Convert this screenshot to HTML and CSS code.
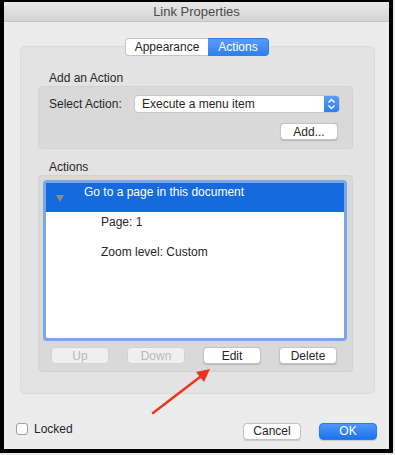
FILE: index.html
```html
<!DOCTYPE html>
<html lang="en">
<head>
    <meta charset="UTF-8">
    <title>Link Properties</title>
    <link rel="stylesheet" href="styles.css">
</head>
<body>

<div class="window">
    <div class="titlebar">Link Properties</div>

    <div class="content">
        <div class="tabs">
            <span class="tab">Appearance</span>
            <span class="tab active">Actions</span>
        </div>

        <div class="group">
            <div class="label">Add an Action</div>
            <div class="box add-box">
                <div class="select-row">
                    <span class="select-label">Select Action:</span>
                    <div class="popup">
                        <span class="popup-text">Execute a menu item</span>
                        <span class="popup-arrows">
                            <svg width="9" height="12" viewBox="0 0 9 12">
                                <path d="M1.5 4.5 L4.5 1.5 L7.5 4.5 M1.5 7.5 L4.5 10.5 L7.5 7.5" fill="none" stroke="#fff" stroke-width="1.4"/>
                            </svg>
                        </span>
                    </div>
                </div>
                <div class="add-row">
                    <button class="btn">Add...</button>
                </div>
            </div>

            <div class="label actions-label">Actions</div>
            <div class="box list-box">
                <div class="list">
                    <div class="row selected">
                        <span class="disclosure"></span>
                        <span class="row-text">Go to a page in this document</span>
                    </div>
                    <div class="row sub">Page: 1</div>
                    <div class="row sub">Zoom level: Custom</div>
                </div>
                <div class="list-buttons">
                    <button class="btn" disabled>Up</button>
                    <button class="btn" disabled>Down</button>
                    <button class="btn">Edit</button>
                    <button class="btn">Delete</button>
                </div>
            </div>
        </div>

        <div class="footer">
            <label class="locked"><span class="checkbox"></span>Locked</label>
            <div class="footer-buttons">
                <button class="btn">Cancel</button>
                <button class="btn primary">OK</button>
            </div>
        </div>
    </div>
</div>

<!-- annotation arrow -->
<svg class="annotation" width="395" height="455" viewBox="0 0 395 455">
    <line x1="153" y1="413" x2="200" y2="377" stroke="#f0321e" stroke-width="2.5" stroke-linecap="round"/>
    <polygon points="210,369 196,372 204,382" fill="#f0321e"/>
</svg>

</body>
</html>
```

FILE: styles.css
```css
body {
    margin: 0;
    background-color: #e9e9e9;
    font-family: 'Liberation Sans', Arial, sans-serif;
    font-size: 12px;
    color: #262626;
}
.window {
    box-sizing: border-box;
    width: 393px;
    height: 453px;
    border: 4px solid #000;
    border-top-width: 2px;
    background-color: #ececec;
}
.titlebar {
    height: 19px;
    line-height: 19px;
    text-align: center;
    font-size: 13px;
    color: #4a4a4a;
    background: linear-gradient(#e8e8e8, #d4d4d4);
    border-bottom: 1px solid #c4c4c4;
}
.content {
    padding: 16px 12px 0 12px;
}
.tabs {
    display: flex;
    justify-content: center;
    position: relative;
    z-index: 1;
    padding-left: 1px;
}
.tab {
    height: 16px;
    line-height: 16px;
    width: 82px;
    text-align: center;
    background-color: #fff;
    border: 1px solid #c6c6c6;
    border-right: none;
    border-radius: 4px 0 0 4px;
    font-size: 12px;
}
.tab.active {
    width: 60px;
    color: #fff;
    background: linear-gradient(#5a9cf6, #2f7ff0);
    border: 1px solid #2f7ff0;
    border-left: none;
    border-radius: 0 4px 4px 0;
}
.group {
    margin: -10px 2px 0 4px;
    padding: 24px 21px 21px 17px;
    background-color: #e3e3e3;
    border: 1px solid #dadada;
    border-radius: 5px;
}
.label {
    height: 14px;
    line-height: 14px;
    padding-left: 11px;
    margin-bottom: 1px;
}
.actions-label {
    margin-top: 11px;
}
.box {
    background-color: #d9d9d9;
    border: 1px solid #d2d2d2;
    border-radius: 4px;
}
.add-box {
    padding: 8px 12px 8px 10px;
}
.select-row {
    display: flex;
    align-items: center;
    height: 18px;
}
.select-label {
    width: 85px;
}
.popup {
    flex: 1;
    display: flex;
    height: 16px;
    background-color: #fff;
    border: 1px solid #c6c6c6;
    border-radius: 4px;
    overflow: hidden;
}
.popup-text {
    flex: 1;
    line-height: 16px;
    padding-left: 7px;
}
.popup-arrows {
    width: 15px;
    display: flex;
    align-items: center;
    justify-content: center;
    background: linear-gradient(#5a9cf6, #2f7ff0);
}
.add-row {
    display: flex;
    justify-content: flex-end;
    margin-top: 10px;
    padding-right: 2px;
}
.btn {
    box-sizing: border-box;
    width: 58px;
    height: 17px;
    padding: 0;
    font-family: inherit;
    font-size: 12px;
    color: #262626;
    background-color: #fff;
    border: 1px solid #c4c4c4;
    border-radius: 4px;
    box-shadow: 0 0.5px 1px rgba(0, 0, 0, 0.15);
}
.btn:disabled {
    color: #b8b8b8;
    background-color: #efefef;
    border-color: #d3d3d3;
    box-shadow: none;
}
.btn.primary {
    color: #fff;
    background: linear-gradient(#4f98f8, #1c72ef);
    border-color: #2a7af0;
}
.list-box {
    padding: 4px 5px 7px 4px;
}
.list {
    height: 155px;
    background-color: #fff;
    border: 3px solid #79a7e8;
    border-radius: 4px;
}
.row {
    height: 30px;
}
.row.selected {
    display: flex;
    height: 29px;
    background-color: #156ade;
    color: #fff;
}
.disclosure {
    width: 0;
    height: 0;
    margin: 12px 20px 0 10px;
    border-left: 4px solid transparent;
    border-right: 4px solid transparent;
    border-top: 7px solid #8c8c8c;
}
.row-text {
    line-height: 18px;
}
.row.sub {
    line-height: 18px;
    padding-left: 55px;
}
.row.selected + .row.sub {
    margin-top: 1px;
}
.list-buttons {
    display: flex;
    gap: 18px;
    margin-top: 6px;
    padding-left: 8px;
}
.footer {
    display: flex;
    justify-content: space-between;
    align-items: center;
    margin-top: 28px;
}
.locked {
    display: flex;
    align-items: center;
    gap: 6px;
    margin-bottom: 4px;
}
.checkbox {
    box-sizing: border-box;
    width: 12px;
    height: 12px;
    background-color: #fff;
    border: 1px solid #9f9f9f;
    border-radius: 3px;
}
.footer-buttons {
    display: flex;
    gap: 18px;
}
.annotation {
    position: absolute;
    left: 0;
    top: 0;
    pointer-events: none;
}
```
